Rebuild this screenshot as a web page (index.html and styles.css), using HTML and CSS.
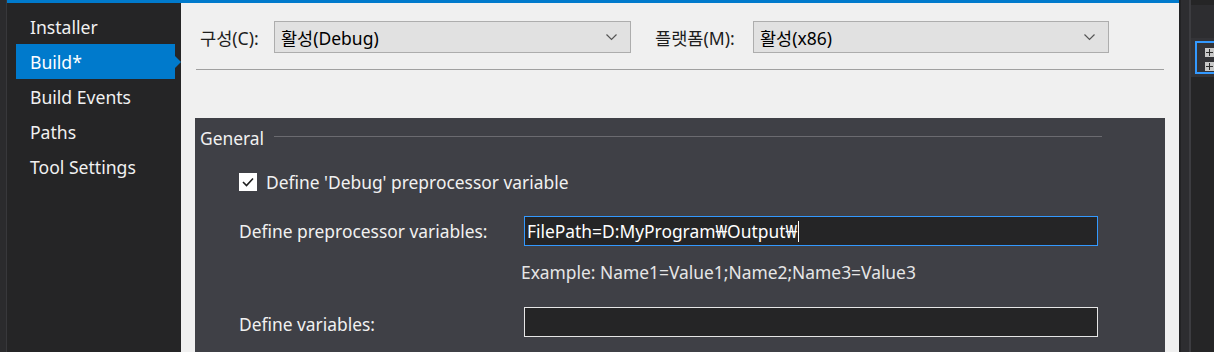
FILE: index.html
```html
<!DOCTYPE html>
<html lang="ko">
<head>
<meta charset="utf-8">
<title>Build</title>
<link rel="stylesheet" href="styles.css">
</head>
<body>
<div class="app">
  <div class="edge"></div>
  <div class="doc">
    <div class="doc-body">
      <nav class="sidebar">
        <div class="nav-item">Installer</div>
        <div class="nav-item active">Build*<span class="nav-arrow"></span></div>
        <div class="nav-item">Build Events</div>
        <div class="nav-item">Paths</div>
        <div class="nav-item">Tool Settings</div>
      </nav>
      <main class="main">
        <div class="config-row">
          <span class="cfg-label lbl1">구성(C):</span>
          <div class="select sel1">
            <span class="select-text">활성(Debug)</span>
            <svg class="chev" width="11" height="7" viewBox="0 0 11 7"><polyline points="0.5,0.5 5.5,5.5 10.5,0.5" fill="none" stroke="#555" stroke-width="1.2"/></svg>
          </div>
          <span class="cfg-label lbl2">플랫폼(M):</span>
          <div class="select sel2">
            <span class="select-text">활성(x86)</span>
            <svg class="chev" width="11" height="7" viewBox="0 0 11 7"><polyline points="0.5,0.5 5.5,5.5 10.5,0.5" fill="none" stroke="#555" stroke-width="1.2"/></svg>
          </div>
        </div>
        <div class="rule"></div>
        <section class="panel">
          <div class="group-head"><span class="group-title">General</span><span class="group-line"></span></div>
          <div class="check-row">
            <span class="checkbox"><svg width="18" height="18" viewBox="0 0 18 18"><polyline points="4,9 7.5,12.5 14,5.5" fill="none" stroke="#1e1e1e" stroke-width="1.6"/></svg></span>
            <span class="check-text">Define 'Debug' preprocessor variable</span>
          </div>
          <div class="field-row first">
            <span class="field-label">Define preprocessor variables:</span>
            <div class="textbox focus"><span class="tb-text">FilePath=D:MyProgram₩Output₩</span><span class="caret"></span></div>
          </div>
          <div class="hint">Example: Name1=Value1;Name2;Name3=Value3</div>
          <div class="field-row second">
            <span class="field-label">Define variables:</span>
            <div class="textbox"></div>
          </div>
        </section>
      </main>
    </div>
  </div>
  <div class="dock">
    <div class="dock-sep"></div>
    <div class="dock-mid"></div>
    <div class="dock-line"></div>
    <div class="dock-pane">
      <div class="dock-top"></div>
      <div class="dock-head">
        <div class="dock-box">
          <span class="plus"></span>
          <span class="plus"></span>
        </div>
      </div>
    </div>
  </div>
</div>
</body>
</html>
```

FILE: styles.css
```css
* { box-sizing: border-box; }
html, body { margin: 0; padding: 0; }
body {
  width: 1214px;
  height: 352px;
  overflow: hidden;
  background: #252526;
  font-family: "Noto Sans", "Noto Sans CJK KR", sans-serif;
  font-size: 17.4px;
}
.app {
  display: flex;
  height: 352px;
}
.edge {
  width: 7px;
  background: #2b2b2d;
  border-right: 1px solid #38383b;
}
.doc {
  width: 1177px;
  display: flex;
  flex-direction: column;
  border-top: 3px solid #007acc;
}
.doc-body {
  flex: 1;
  display: flex;
}
.sidebar {
  width: 174px;
  background: #252526;
  padding: 6px 0 0 9px;
}
.nav-item {
  position: relative;
  width: 159px;
  height: 35px;
  line-height: 33px;
  padding: 2px 0 0 14px;
  color: #f1f1f1;
  font-size: 17.6px;
}
.nav-item.active {
  background: #007acc;
  color: #ffffff;
}
.nav-arrow {
  position: absolute;
  right: -6px;
  top: 12px;
  width: 0;
  height: 0;
  border-top: 6px solid transparent;
  border-bottom: 6px solid transparent;
  border-left: 6px solid #007acc;
}
.main {
  flex: 1;
  background: #f0f0f0;
  padding: 18px 15px 0 15px;
  display: flex;
  flex-direction: column;
}
.config-row {
  display: flex;
  align-items: center;
  height: 32px;
  padding-left: 4px;
}
.cfg-label {
  color: #1e1e1e;
  font-size: 17.6px;
}
.lbl1 { width: 74px; }
.lbl2 { width: 98px; margin-left: 24px; }
.select {
  height: 32px;
  background: #e1e1e1;
  border: 1px solid #adadad;
  display: flex;
  align-items: center;
  justify-content: space-between;
  padding: 0 13px 0 6px;
  color: #000;
  font-size: 17.5px;
}
.sel1 { width: 357px; }
.sel2 { width: 356px; }
.chev { margin-top: 1px; }
.rule {
  margin-top: 16px;
  height: 1px;
  background: #a0a0a0;
}
.panel {
  margin: 48px -1px 0 -1px;
  flex: 1;
  background: #3f4046;
  color: #f1f1f1;
  padding-left: 5px;
}
.group-head {
  display: flex;
  align-items: center;
  padding-top: 10px;
  height: 30px;
  line-height: 20px;
}
.group-line {
  flex: 1;
  height: 1px;
  background: #6b6b70;
  margin: 0 63px 4px 10px;
}
.check-row {
  display: flex;
  align-items: center;
  margin-top: 25px;
  padding-left: 39px;
  height: 18px;
}
.checkbox {
  width: 18px;
  height: 18px;
  background: #ffffff;
  display: block;
}
.checkbox svg { display: block; }
.check-text {
  margin-left: 9px;
}
.field-row {
  display: flex;
  align-items: center;
  padding-left: 39px;
}
.field-row.first { margin-top: 25px; }
.field-row.second { margin-top: 25px; }
.field-label {
  width: 285px;
}
.field-row.second .field-label { padding-top: 3px; }
.textbox {
  width: 574px;
  height: 30px;
  background: #252526;
  border: 1px solid #e6e6e6;
  display: flex;
  align-items: center;
  padding-left: 2px;
  color: #ffffff;
}
.textbox.focus {
  border-color: #3399ff;
}
.caret {
  width: 1px;
  height: 21px;
  background: #ffffff;
  margin-left: 1px;
}
.hint {
  margin-top: 16px;
  height: 20px;
  line-height: 20px;
  padding-left: 321px;
  color: #e6e6e6;
}
.dock {
  flex: 1;
  display: flex;
}
.dock-sep {
  width: 2px;
  background: #222224;
}
.dock-mid {
  width: 8px;
  background: #2d2d30;
}
.dock-line {
  width: 2px;
  background: #3c3c40;
}
.dock-pane {
  flex: 1;
  display: flex;
  flex-direction: column;
  background: #252526;
}
.dock-top {
  height: 38px;
  background: #2d2d30;
  border-top: 5px solid #252526;
}
.dock-head {
  height: 39px;
  background: #333337;
  padding: 3px 0 0 4px;
}
.dock-box {
  height: 33px;
  border: 2px solid #3399ff;
  border-right: none;
  padding: 5px 0 0 8px;
  display: flex;
  flex-direction: column;
  gap: 5px;
}
.plus {
  position: relative;
  display: block;
  width: 9px;
  height: 9px;
  background: #c8c8c8;
}
.plus::before, .plus::after {
  content: "";
  position: absolute;
  background: #2a2a2a;
}
.plus::before { left: 1px; top: 4px; width: 7px; height: 1px; }
.plus::after { left: 4px; top: 1px; width: 1px; height: 7px; }
```
